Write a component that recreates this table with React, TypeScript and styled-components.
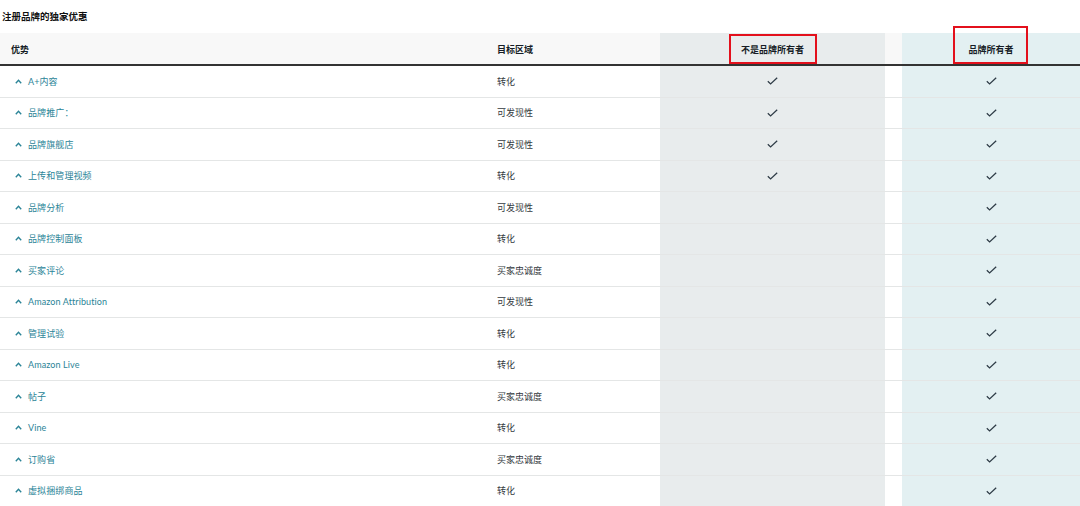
import React from "react";
import styled, { createGlobalStyle } from "styled-components";

const GlobalStyle = createGlobalStyle`
  html, body { margin: 0; padding: 0; background: #ffffff; }
  body {
    font-family: Lato, "Noto Sans CJK SC", "Noto Sans", sans-serif;
    -webkit-font-smoothing: antialiased;
  }
`;

const COLS = "487px 173px 225px 17px 178px";

const Page = styled.div`
  width: 1080px;
  height: 506px;
  overflow: hidden;
  display: flex;
  flex-direction: column;
`;

const Title = styled.h2`
  margin: 0;
  height: 33px;
  padding-left: 2px;
  display: flex;
  align-items: center;
  font-size: 9.5px;
  font-weight: 700;
  color: #111111;
  padding-bottom: 2px;
  box-sizing: border-box;
  flex: none;
`;

const HeaderRow = styled.div`
  display: grid;
  grid-template-columns: ${COLS};
  height: 33px;
  border-bottom: 2px solid #333333;
  box-sizing: border-box;
  flex: none;
`;

type Tone = "plain" | "gray" | "teal" | "gap";

const headerBg: Record<Tone, string> = {
  plain: "#f8f8f8",
  gray: "#e8eced",
  teal: "#e3f0f2",
  gap: "#f8f8f8",
};

const bodyBg: Record<Tone, string> = {
  plain: "#ffffff",
  gray: "#e8eced",
  teal: "#e3f0f2",
  gap: "#ffffff",
};

const HeadCell = styled.div<{ $tone: Tone; $center?: boolean; $pad?: number }>`
  position: relative;
  background: ${(p) => headerBg[p.$tone]};
  display: flex;
  align-items: center;
  justify-content: ${(p) => (p.$center ? "center" : "flex-start")};
  padding-left: ${(p) => p.$pad ?? 0}px;
  padding-top: 1px;
  font-size: 9px;
  font-weight: 700;
  color: #161d26;
`;

const Highlight = styled.span<{ $left: number; $top: number; $w: number; $h: number }>`
  position: absolute;
  left: ${(p) => p.$left}px;
  top: ${(p) => p.$top}px;
  width: ${(p) => p.$w}px;
  height: ${(p) => p.$h}px;
  border: 2px solid #e3101c;
  box-sizing: border-box;
  pointer-events: none;
`;

const Row = styled.div`
  display: grid;
  grid-template-columns: ${COLS};
  height: 31.5px;
  border-bottom: 1px solid #e4e6e6;
  box-sizing: border-box;
  flex: none;
`;

const Cell = styled.div<{ $tone: Tone; $center?: boolean; $pad?: number }>`
  background: ${(p) => bodyBg[p.$tone]};
  display: flex;
  align-items: center;
  justify-content: ${(p) => (p.$center ? "center" : "flex-start")};
  padding-left: ${(p) => p.$pad ?? 0}px;
  font-size: 9px;
  color: #333a40;
`;

const Benefit = styled.span`
  display: inline-flex;
  align-items: center;
  gap: 6px;
  color: #2b8497;
  font-size: 9px;
  letter-spacing: 0.1px;
`;

const Caret = () => (
  <svg width="7" height="5" viewBox="0 0 7 5" aria-hidden>
    <path d="M0.8 4.2 L3.5 1.3 L6.2 4.2" fill="none" stroke="#2b8497" strokeWidth="1.4" />
  </svg>
);

const Check = () => (
  <svg width="11" height="8" viewBox="0 0 11 8" aria-hidden>
    <path d="M0.8 4.2 L3.6 6.9 L10.2 0.7" fill="none" stroke="#2e3b46" strokeWidth="1.25" />
  </svg>
);

type Item = { name: string; area: string; nonOwner: boolean };

const rows: Item[] = [
  { name: "A+内容", area: "转化", nonOwner: true },
  { name: "品牌推广：", area: "可发现性", nonOwner: true },
  { name: "品牌旗舰店", area: "可发现性", nonOwner: true },
  { name: "上传和管理视频", area: "转化", nonOwner: true },
  { name: "品牌分析", area: "可发现性", nonOwner: false },
  { name: "品牌控制面板", area: "转化", nonOwner: false },
  { name: "买家评论", area: "买家忠诚度", nonOwner: false },
  { name: "Amazon Attribution", area: "可发现性", nonOwner: false },
  { name: "管理试验", area: "转化", nonOwner: false },
  { name: "Amazon Live", area: "转化", nonOwner: false },
  { name: "帖子", area: "买家忠诚度", nonOwner: false },
  { name: "Vine", area: "转化", nonOwner: false },
  { name: "订购省", area: "买家忠诚度", nonOwner: false },
  { name: "虚拟捆绑商品", area: "转化", nonOwner: false },
];

export default function App() {
  return (
    <Page>
      <GlobalStyle />
      <Title>注册品牌的独家优惠</Title>
      <HeaderRow>
        <HeadCell $tone="plain" $pad={11}>优势</HeadCell>
        <HeadCell $tone="plain" $pad={10}>目标区域</HeadCell>
        <HeadCell $tone="gray" $center>
          不是品牌所有者
          <Highlight $left={69} $top={1} $w={88} $h={30} />
        </HeadCell>
        <HeadCell $tone="gap" />
        <HeadCell $tone="teal" $center>
          品牌所有者
          <Highlight $left={51} $top={-7} $w={75} $h={38} />
        </HeadCell>
      </HeaderRow>
      {rows.map((r) => (
        <Row key={r.name}>
          <Cell $tone="plain" $pad={15}>
            <Benefit>
              <Caret />
              {r.name}
            </Benefit>
          </Cell>
          <Cell $tone="plain" $pad={10}>{r.area}</Cell>
          <Cell $tone="gray" $center>{r.nonOwner ? <Check /> : null}</Cell>
          <Cell $tone="gap" />
          <Cell $tone="teal" $center><Check /></Cell>
        </Row>
      ))}
    </Page>
  );
}
